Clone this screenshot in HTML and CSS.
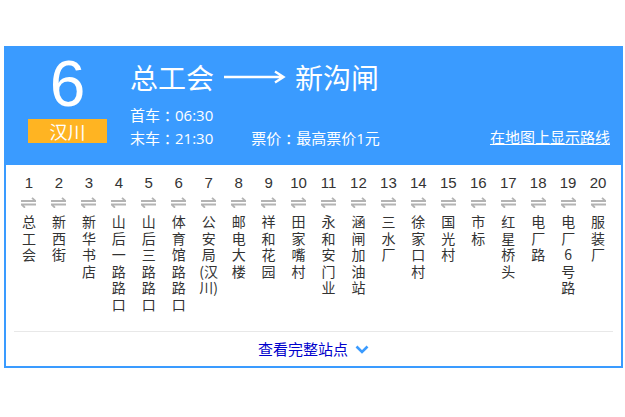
FILE: index.html
```html
<!DOCTYPE html>
<html lang="zh-CN">
<head>
<meta charset="utf-8">
<title>6路公交</title>
<link rel="stylesheet" href="styles.css">
</head>
<body>
<div class="card">
  <div class="header">
    <div class="badge">
      <div class="line-no">6</div>
      <div class="company">汉川</div>
    </div>
    <div class="info">
      <div class="title">
        <span>总工会</span>
        <svg class="arrow" width="62" height="14" viewBox="0 0 62 14"><path d="M0 7H59M51 1.5L59.5 7L51 12.5" fill="none" stroke="#fff" stroke-width="2.4"/></svg>
        <span>新沟闸</span>
      </div>
      <div class="row"><span>首车<span class="colon">：</span>06:30</span></div>
      <div class="row">
        <span>末车<span class="colon">：</span>21:30</span>
        <span class="price">票价<span class="colon">：</span>最高票价1元</span>
        <a class="map-link" href="#">在地图上显示路线</a>
      </div>
    </div>
  </div>
  <div class="stations">
    <div class="st"><div class="num">1</div><svg class="dir" width="15" height="11" viewBox="0 0 15 11"><path d="M0 4H14.5L11 0.8M15 7.5H0.5L4 10.7" fill="none" stroke="#b3b3b3" stroke-width="1.8"/></svg><div class="name">总工会</div></div>
    <div class="st"><div class="num">2</div><svg class="dir" width="15" height="11" viewBox="0 0 15 11"><path d="M0 4H14.5L11 0.8M15 7.5H0.5L4 10.7" fill="none" stroke="#b3b3b3" stroke-width="1.8"/></svg><div class="name">新西街</div></div>
    <div class="st"><div class="num">3</div><svg class="dir" width="15" height="11" viewBox="0 0 15 11"><path d="M0 4H14.5L11 0.8M15 7.5H0.5L4 10.7" fill="none" stroke="#b3b3b3" stroke-width="1.8"/></svg><div class="name">新华书店</div></div>
    <div class="st"><div class="num">4</div><svg class="dir" width="15" height="11" viewBox="0 0 15 11"><path d="M0 4H14.5L11 0.8M15 7.5H0.5L4 10.7" fill="none" stroke="#b3b3b3" stroke-width="1.8"/></svg><div class="name">山后一路路口</div></div>
    <div class="st"><div class="num">5</div><svg class="dir" width="15" height="11" viewBox="0 0 15 11"><path d="M0 4H14.5L11 0.8M15 7.5H0.5L4 10.7" fill="none" stroke="#b3b3b3" stroke-width="1.8"/></svg><div class="name">山后三路路口</div></div>
    <div class="st"><div class="num">6</div><svg class="dir" width="15" height="11" viewBox="0 0 15 11"><path d="M0 4H14.5L11 0.8M15 7.5H0.5L4 10.7" fill="none" stroke="#b3b3b3" stroke-width="1.8"/></svg><div class="name">体育馆路路口</div></div>
    <div class="st"><div class="num">7</div><svg class="dir" width="15" height="11" viewBox="0 0 15 11"><path d="M0 4H14.5L11 0.8M15 7.5H0.5L4 10.7" fill="none" stroke="#b3b3b3" stroke-width="1.8"/></svg><div class="name">公安局(汉川)</div></div>
    <div class="st"><div class="num">8</div><svg class="dir" width="15" height="11" viewBox="0 0 15 11"><path d="M0 4H14.5L11 0.8M15 7.5H0.5L4 10.7" fill="none" stroke="#b3b3b3" stroke-width="1.8"/></svg><div class="name">邮电大楼</div></div>
    <div class="st"><div class="num">9</div><svg class="dir" width="15" height="11" viewBox="0 0 15 11"><path d="M0 4H14.5L11 0.8M15 7.5H0.5L4 10.7" fill="none" stroke="#b3b3b3" stroke-width="1.8"/></svg><div class="name">祥和花园</div></div>
    <div class="st"><div class="num">10</div><svg class="dir" width="15" height="11" viewBox="0 0 15 11"><path d="M0 4H14.5L11 0.8M15 7.5H0.5L4 10.7" fill="none" stroke="#b3b3b3" stroke-width="1.8"/></svg><div class="name">田家嘴村</div></div>
    <div class="st"><div class="num">11</div><svg class="dir" width="15" height="11" viewBox="0 0 15 11"><path d="M0 4H14.5L11 0.8M15 7.5H0.5L4 10.7" fill="none" stroke="#b3b3b3" stroke-width="1.8"/></svg><div class="name">永和安门业</div></div>
    <div class="st"><div class="num">12</div><svg class="dir" width="15" height="11" viewBox="0 0 15 11"><path d="M0 4H14.5L11 0.8M15 7.5H0.5L4 10.7" fill="none" stroke="#b3b3b3" stroke-width="1.8"/></svg><div class="name">涵闸加油站</div></div>
    <div class="st"><div class="num">13</div><svg class="dir" width="15" height="11" viewBox="0 0 15 11"><path d="M0 4H14.5L11 0.8M15 7.5H0.5L4 10.7" fill="none" stroke="#b3b3b3" stroke-width="1.8"/></svg><div class="name">三水厂</div></div>
    <div class="st"><div class="num">14</div><svg class="dir" width="15" height="11" viewBox="0 0 15 11"><path d="M0 4H14.5L11 0.8M15 7.5H0.5L4 10.7" fill="none" stroke="#b3b3b3" stroke-width="1.8"/></svg><div class="name">徐家口村</div></div>
    <div class="st"><div class="num">15</div><svg class="dir" width="15" height="11" viewBox="0 0 15 11"><path d="M0 4H14.5L11 0.8M15 7.5H0.5L4 10.7" fill="none" stroke="#b3b3b3" stroke-width="1.8"/></svg><div class="name">国光村</div></div>
    <div class="st"><div class="num">16</div><svg class="dir" width="15" height="11" viewBox="0 0 15 11"><path d="M0 4H14.5L11 0.8M15 7.5H0.5L4 10.7" fill="none" stroke="#b3b3b3" stroke-width="1.8"/></svg><div class="name">市标</div></div>
    <div class="st"><div class="num">17</div><svg class="dir" width="15" height="11" viewBox="0 0 15 11"><path d="M0 4H14.5L11 0.8M15 7.5H0.5L4 10.7" fill="none" stroke="#b3b3b3" stroke-width="1.8"/></svg><div class="name">红星桥头</div></div>
    <div class="st"><div class="num">18</div><svg class="dir" width="15" height="11" viewBox="0 0 15 11"><path d="M0 4H14.5L11 0.8M15 7.5H0.5L4 10.7" fill="none" stroke="#b3b3b3" stroke-width="1.8"/></svg><div class="name">电厂路</div></div>
    <div class="st"><div class="num">19</div><svg class="dir" width="15" height="11" viewBox="0 0 15 11"><path d="M0 4H14.5L11 0.8M15 7.5H0.5L4 10.7" fill="none" stroke="#b3b3b3" stroke-width="1.8"/></svg><div class="name">电厂6号路</div></div>
    <div class="st"><div class="num">20</div><svg class="dir" width="15" height="11" viewBox="0 0 15 11"><path d="M0 4H14.5L11 0.8M15 7.5H0.5L4 10.7" fill="none" stroke="#b3b3b3" stroke-width="1.8"/></svg><div class="name">服装厂</div></div>
  </div>
  <div class="more">
    <a class="more-link" href="#">查看完整站点</a>
    <svg class="chev" width="14" height="9" viewBox="0 0 14 9"><path d="M1.5 1.5L7 7L12.5 1.5" fill="none" stroke="#3a9bff" stroke-width="2.6"/></svg>
  </div>
</div>
</body>
</html>
```

FILE: styles.css
```css
html, body {
  margin: 0;
  padding: 0;
  background: #fff;
}

body {
  font-family: "Noto Sans CJK SC", "Microsoft YaHei", sans-serif;
  color: #333;
}

.card {
  margin: 46px 2px 0 4px;
  border: 2px solid #3a9bff;
  background: #fff;
}

.header {
  display: flex;
  background: #3a9bff;
  color: #fff;
  margin-top: -2px;
  padding-top: 2px;
  height: 117px;
}

.badge {
  width: 79px;
  margin-left: 22px;
  padding-top: 4px;
  display: flex;
  flex-direction: column;
  align-items: center;
}

.line-no {
  font-family: "Liberation Sans", Arial, sans-serif;
  font-size: 64px;
  line-height: 64px;
  height: 64px;
}

.company {
  margin-top: 3px;
  width: 79px;
  height: 24px;
  line-height: 24px;
  background: #ffb422;
  text-align: center;
  font-size: 18px;
}

.info {
  flex: 1;
  margin-left: 23px;
  padding: 11px 11px 0 0;
}

.title {
  display: flex;
  align-items: center;
  height: 36px;
  font-size: 28px;
  line-height: 36px;
}

.arrow {
  margin: 0 9px 0 10px;
}

.row {
  display: flex;
  align-items: center;
  height: 23px;
  font-family: "Open Sans", "Noto Sans CJK SC", sans-serif;
  font-size: 15px;
  line-height: 23px;
  white-space: nowrap;
}

.colon {
  display: inline-block;
  width: 15px;
  text-align: center;
  font-family: "Noto Sans CJK SC", sans-serif;
  font-feature-settings: "halt" 1;
}

.title + .row {
  margin-top: 8px;
}

.price {
  margin-left: 38px;
}

.map-link {
  margin-left: auto;
  color: #fff;
  text-decoration: underline;
}

.stations {
  display: flex;
  align-items: flex-start;
  padding: 10px 8px 19px 8px;
}

.st {
  flex: 1;
  display: flex;
  flex-direction: column;
  align-items: center;
}

.num {
  font-family: "Liberation Sans", Arial, sans-serif;
  font-size: 15px;
  line-height: 15px;
  color: #333;
}

.dir {
  display: block;
  margin-top: 7px;
}

.name {
  margin-top: 5px;
  width: 19px;
  font-size: 14px;
  line-height: 16.5px;
  text-align: center;
  word-break: break-all;
  color: #333;
}

.more {
  margin: 0 8px;
  border-top: 1px solid #e8e8e8;
  height: 34px;
  display: flex;
  justify-content: center;
  align-items: center;
}

.more-link {
  font-size: 15px;
  line-height: 34px;
  color: #0000cc;
  text-decoration: none;
}

.chev {
  display: block;
  margin-left: 7px;
}
```
